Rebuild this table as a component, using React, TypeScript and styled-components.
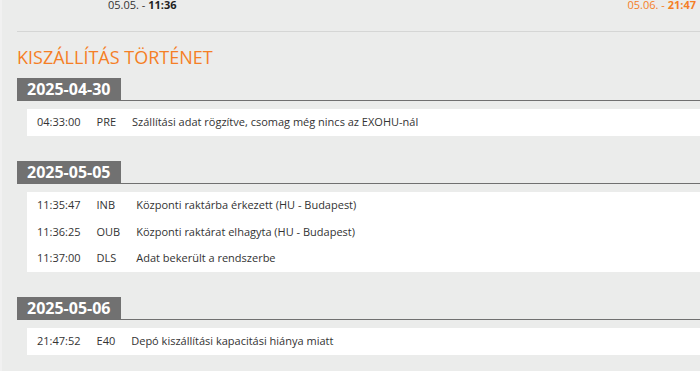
import React from "react";
import styled, { createGlobalStyle } from "styled-components";

const GlobalStyle = createGlobalStyle`
  html, body {
    margin: 0;
    padding: 0;
    background: #ebeceb;
  }
  body {
    font-family: "Open Sans", "Liberation Sans", sans-serif;
    color: #333;
  }
`;

const orange = "#f57f26";

const Page = styled.div`
  min-height: 371px;
  border-left: 2px solid #f1f1f1;
  padding-left: 15px;
  overflow: hidden;
`;

const StatusBar = styled.div`
  display: flex;
  justify-content: space-between;
  height: 31px;
  border-bottom: 1px solid #d5d6d5;
  font-size: 11px;
  line-height: 10px;
`;

const Stamp = styled.span<{ $accent?: boolean }>`
  color: ${(p) => (p.$accent ? orange : "#333")};
  padding: ${(p) => (p.$accent ? "0 4px 0 0" : "0 0 0 91px")};

  b {
    font-weight: 700;
    color: ${(p) => (p.$accent ? orange : "#1e1e1e")};
  }
`;

const Title = styled.h2`
  margin: 15px 0 11px;
  font-size: 18px;
  line-height: 20px;
  font-weight: 400;
  color: ${orange};
  text-transform: uppercase;
`;

const Day = styled.section`
  & + & {
    margin-top: 25.5px;
  }
`;

const DayHead = styled.div`
  border-bottom: 1px solid #707070;
  line-height: 0;
`;

const DateTag = styled.span`
  display: inline-block;
  background: #717171;
  color: #fff;
  font-size: 16px;
  font-weight: 700;
  line-height: 22px;
  padding: 0 11px 0 10px;
`;

const Events = styled.div`
  display: grid;
  grid-template-columns: auto auto 1fr;
  column-gap: 16px;
  margin: 8px 0 0 10px;
  padding-left: 10px;
  background: #fff;
  font-size: 11px;
  line-height: 26.5px;
  color: #333;
`;

const Row = styled.div`
  display: contents;
`;

const Cell = styled.span`
  white-space: nowrap;
`;

type Entry = { time: string; code: string; text: string };

const history: { date: string; entries: Entry[] }[] = [
  {
    date: "2025-04-30",
    entries: [
      { time: "04:33:00", code: "PRE", text: "Szállítási adat rögzítve, csomag még nincs az EXOHU-nál" },
    ],
  },
  {
    date: "2025-05-05",
    entries: [
      { time: "11:35:47", code: "INB", text: "Központi raktárba érkezett (HU - Budapest)" },
      { time: "11:36:25", code: "OUB", text: "Központi raktárat elhagyta (HU - Budapest)" },
      { time: "11:37:00", code: "DLS", text: "Adat bekerült a rendszerbe" },
    ],
  },
  {
    date: "2025-05-06",
    entries: [
      { time: "21:47:52", code: "E40", text: "Depó kiszállítási kapacitási hiánya miatt" },
    ],
  },
];

export default function App() {
  return (
    <>
      <GlobalStyle />
      <Page>
        <StatusBar>
          <Stamp>
            05.05. - <b>11:36</b>
          </Stamp>
          <Stamp $accent>
            05.06. - <b>21:47</b>
          </Stamp>
        </StatusBar>

        <Title>Kiszállítás történet</Title>

        {history.map((day) => (
          <Day key={day.date}>
            <DayHead>
              <DateTag>{day.date}</DateTag>
            </DayHead>
            <Events>
              {day.entries.map((e) => (
                <Row key={e.time}>
                  <Cell>{e.time}</Cell>
                  <Cell>{e.code}</Cell>
                  <Cell>{e.text}</Cell>
                </Row>
              ))}
            </Events>
          </Day>
        ))}
      </Page>
    </>
  );
}
